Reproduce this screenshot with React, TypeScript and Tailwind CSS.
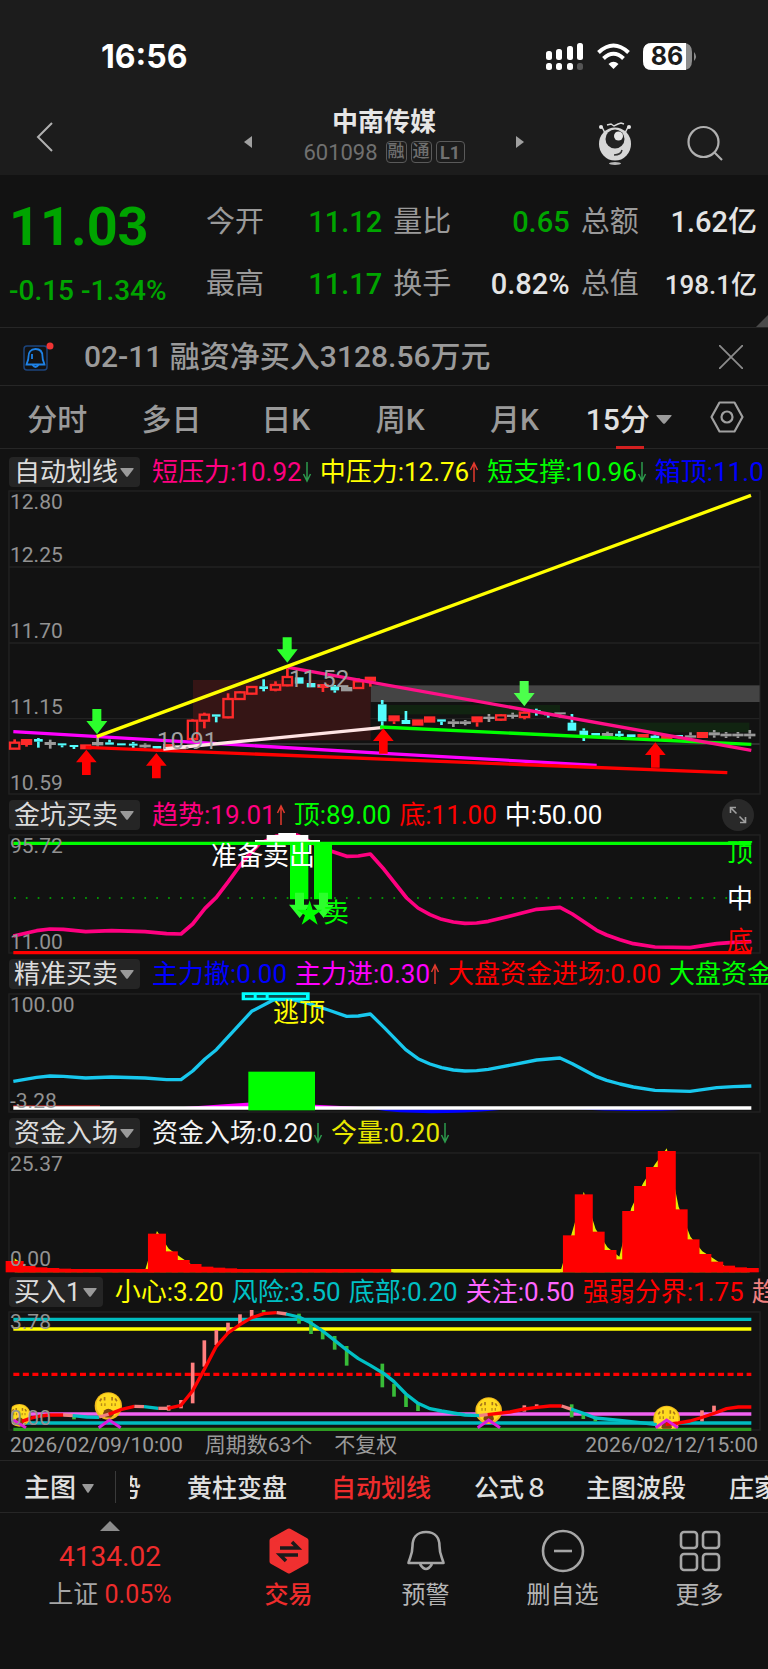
import React from 'react';

type Pt = [number, number];
const pts = (a: Pt[]) => a.map((p) => p.join(',')).join(' ');

const RED = '#ff2a2a';
const CYAN = '#54fcfc';
const GRAY = '#9a9a9a';
const STEP = 35.57;
const barX = (i: number) => 44 + STEP * i;

/* kind, body top, body bottom, wick top, wick bottom */
type Candle = ['h' | 'r' | 'c' | 'g', number, number, number, number];
const CANDLES: Candle[] = [
  ['h', 786, 808, 778, 808], ['r', 777, 795, 777, 800], ['c', 777, 785, 774, 803], ['g', 786, 795, 779, 806],
  ['c', 790, 796, 790, 802], ['c', 795, 801, 795, 807], ['r', 793, 808, 793, 808], ['g', 786, 796, 773, 800],
  ['c', 787, 794, 779, 794], ['c', 790, 796, 790, 796], ['c', 791, 797, 786, 804], ['g', 794, 802, 790, 805],
  ['c', 798, 806, 798, 814], ['r', 792, 803, 792, 803], ['g', 795, 808, 795, 808], ['h', 720, 779, 718, 781],
  ['h', 702, 724, 698, 745], ['c', 703, 710, 703, 727], ['h', 655, 714, 640, 715], ['h', 635, 659, 633, 660],
  ['h', 619, 643, 618, 644], ['c', 619, 627, 598, 634], ['h', 613, 631, 604, 634], ['h', 589, 618, 565, 619],
  ['c', 592, 611, 592, 611], ['c', 609, 622, 609, 622], ['r', 612, 624, 612, 636], ['c', 619, 631, 615, 638],
  ['g', 621, 634, 621, 634], ['h', 602, 626, 595, 627], ['r', 590, 604, 590, 620], ['c', 673, 724, 660, 745],
  ['r', 706, 724, 706, 732], ['c', 720, 732, 693, 732], ['r', 718, 737, 718, 737], ['r', 709, 728, 709, 728],
  ['c', 718, 725, 718, 735], ['g', 724, 732, 718, 741], ['g', 724, 732, 720, 736], ['r', 709, 727, 709, 740],
  ['g', 710, 717, 702, 726], ['h', 704, 721, 702, 723], ['g', 704, 711, 698, 716], ['h', 696, 713, 694, 718],
  ['c', 690, 696, 686, 707], ['c', 700, 706, 700, 713], ['g', 697, 703, 697, 713], ['c', 728, 752, 702, 752],
  ['c', 752, 765, 745, 783], ['c', 759, 767, 759, 767], ['g', 759, 768, 755, 777], ['c', 761, 768, 753, 775],
  ['c', 763, 771, 763, 771], ['r', 762, 773, 762, 773], ['c', 767, 775, 764, 775], ['r', 765, 783, 765, 783],
  ['c', 765, 773, 765, 773], ['g', 766, 773, 757, 778], ['r', 756, 774, 756, 774], ['g', 757, 766, 750, 773],
  ['g', 761, 769, 756, 774], ['g', 761, 769, 756, 774], ['g', 761, 769, 750, 776],
];

const TREND: Pt[] = [
  [40, 438], [110, 422], [150, 417], [190, 418], [257, 425], [335, 422], [435, 425], [500, 431], [543, 432],
  [578, 402], [615, 355], [649, 322], [685, 275], [730, 213], [780, 160], [830, 138], [890, 135], [940, 160],
  [990, 182], [1040, 199], [1075, 198], [1111, 192], [1152, 238], [1220, 324], [1254, 354], [1290, 374],
  [1325, 388], [1360, 396], [1395, 400], [1430, 399], [1465, 394], [1540, 376], [1610, 358], [1680, 352],
  [1717, 372], [1790, 421], [1820, 435], [1860, 449], [1900, 461], [1965, 471], [2070, 473], [2150, 461],
  [2200, 457], [2254, 455],
];
const FLOW: Pt[] = [
  [40, 394], [110, 382], [150, 378], [190, 379], [257, 384], [335, 381], [435, 384], [500, 389], [543, 389],
  [578, 363], [615, 327], [649, 299], [755, 184], [820, 150], [870, 147], [925, 160], [985, 180], [1040, 199],
  [1075, 198], [1111, 192], [1152, 232], [1217, 299], [1254, 326], [1290, 342], [1325, 353], [1360, 360],
  [1395, 363], [1430, 362], [1465, 358], [1540, 344], [1610, 330], [1680, 324], [1717, 341], [1790, 380],
  [1820, 391], [1860, 402], [1900, 411], [1965, 421], [2070, 424], [2150, 413], [2200, 410], [2254, 408],
];

const CAPITAL: Record<number, number> = {
  0: 453, 1: 468, 2: 472, 3: 474, 4: 476, 12: 371, 13: 424, 14: 450, 15: 462, 16: 470, 17: 473, 18: 475,
  47: 376, 48: 253, 49: 365, 50: 420, 51: 448, 52: 303, 53: 228, 54: 171, 55: 123, 56: 298, 57: 388, 58: 432,
  59: 455, 60: 467, 61: 472, 62: 474,
};
const capitalTop = (i: number) => CAPITAL[i] ?? (i > 31 && i < 47 ? 484 : 477);
const BARS = Array.from({ length: 63 }, (_, i) => i);

const SEGMENTS: [string, Pt[]][] = [
  ['#ff0000', [[66, 424], [90, 415], [120, 408], [150, 405], [190, 405]]],
  ['#f08080', [[190, 405], [222, 407]]],
  ['#00c0c4', [[218, 407], [260, 411], [297, 412]]],
  ['#f08080', [[297, 411], [328, 402]]],
  ['#ff0000', [[326, 403], [365, 388], [403, 379]]],
  ['#f08080', [[403, 379], [432, 380]]],
  ['#00c0c4', [[432, 380], [475, 385]]],
  ['#f08080', [[475, 385], [505, 385]]],
  ['#ff0000', [[503, 385], [543, 376], [578, 332], [613, 268], [649, 199], [684, 159], [720, 134], [755, 113], [791, 101], [830, 98]]],
  ['#f08080', [[830, 98], [860, 102]]],
  ['#00c0c4', [[858, 102], [897, 111], [933, 129], [968, 153], [1004, 181], [1040, 210], [1075, 236], [1111, 256], [1152, 281], [1182, 305], [1218, 342], [1254, 370], [1290, 386], [1325, 393], [1395, 405], [1440, 407]]],
  ['#f08080', [[1437, 407], [1465, 403]]],
  ['#ff0000', [[1463, 404], [1530, 396], [1573, 387], [1610, 382], [1650, 378], [1685, 378]]],
  ['#f08080', [[1685, 378], [1715, 388]]],
  ['#00c0c4', [[1713, 387], [1750, 400], [1786, 414], [1860, 421], [1920, 428], [1970, 434]]],
  ['#ff0000', [[1997, 433], [2035, 429], [2070, 423], [2110, 411], [2145, 399], [2180, 386], [2215, 381], [2254, 381]]],
];
const UP_TICKS: [number, number, number][] = [
  [506, 376, 392], [543, 360, 385], [578, 248, 370], [613, 181, 260], [649, 150, 195], [684, 128, 160],
  [720, 103, 135], [755, 90, 115], [1573, 376, 395], [1610, 373, 382], [2106, 391, 424], [2142, 377, 398],
];
const DOWN_TICKS: [number, number, number][] = [
  [222, 405, 418], [791, 90, 98], [897, 101, 131], [933, 121, 162], [968, 150, 178], [1004, 168, 209],
  [1040, 198, 257], [1147, 251, 322], [1182, 311, 350], [1218, 345, 381], [1254, 370, 393], [1715, 373, 412],
  [1750, 402, 417], [1786, 410, 424],
];

function Chart({ h, shift, label, axis, children, texts }: {
  h: number; shift: number; label: string; axis: [string, number][];
  children: React.ReactNode; texts?: React.ReactNode;
}) {
  return (
    <svg viewBox={`0 0 768 ${h}`} role="img" aria-label={label} className="block w-full overflow-visible">
      <rect x="9" y="0" width="751" height={h - 1} fill="none" stroke="#222222" strokeWidth="1.4" />
      <g transform={`scale(0.333333) translate(0 ${-shift})`}>{children}</g>
      {axis.map(([t, y]) => (
        <text key={t} x="10" y={y} fontSize="21" fill="#929292">{t}</text>
      ))}
      {texts}
    </svg>
  );
}

function Caret({ className }: { className: string }) {
  return (
    <svg viewBox="0 0 12 9" preserveAspectRatio="none" className={className} aria-hidden="true">
      <path d="M1 0h10q1.400 0 .6 1L6.700 8.400q-.7.8-1.400 0L.4 1Q-.4 0 1 0z" fill="currentColor" />
    </svg>
  );
}

type Item = { t: string; c: string; a?: 'up' | 'down' };

function Indicators({ name, items, first, expand }: { name: string; items: Item[]; first?: boolean; expand?: boolean }) {
  return (
    <div className={`flex items-center gap-3 overflow-hidden pl-[9px] ${first ? 'h-[42px] pt-1' : 'h-10'}`}>
      <button className="flex h-[30px] shrink-0 items-center gap-0.5 rounded bg-[#252525] pr-1.5 pl-[5px] text-[26px] leading-[30px] text-[#dcdcdc]">
        {name}
        <Caret className="h-[9px] w-[14px] text-[#9a9a9a]" />
      </button>
      <div className="flex min-w-0 flex-1 items-center gap-2 overflow-hidden text-[26px] leading-[34px] whitespace-nowrap">
        {items.map((it) => (
          <span key={it.t} className={`flex shrink-0 items-center ${it.c}`}>
            {it.t}
            {it.a && (
              <svg viewBox="0 0 10 22" className="h-[22px] w-[10px]" aria-hidden="true">
                {it.a === 'up' ? (
                  <path d="M5 21V3M1.500 9L5 2l3.500 7" fill="none" stroke="#e23a2e" strokeWidth="1.500" />
                ) : (
                  <path d="M5 1v18M1.500 13L5 20l3.500-7" fill="none" stroke="#2d9a4c" strokeWidth="1.500" />
                )}
              </svg>
            )}
          </span>
        ))}
      </div>
      {expand && (
        <button aria-label="展开" className="mr-[14px] flex size-8 shrink-0 items-center justify-center rounded-full bg-[#292929]">
          <svg viewBox="0 0 18 18" className="size-[18px]" fill="none" stroke="#a0a0a0" strokeWidth="1.600">
            <path d="M1.500 7V1.500H7M1.500 1.500l6 6M11 16.500h5.500V11M16.500 16.500l-6-6" />
          </svg>
        </button>
      )}
    </div>
  );
}

const downArrow = (x: number, y: number) => `M${x - 13} ${y}h27v36h18l-31 40l-32-40h18z`;
const upArrow = (x: number, y: number) => `M${x} ${y}l31 38h-18v38h-26v-38h-18z`;

function MainChart() {
  return (
    <Chart h={304} shift={33} label="自动划线" axis={[['12.80', 18], ['12.25', 71], ['11.70', 147], ['11.15', 223], ['10.59', 299]]}
      texts={<g fontSize="24" fill="#a0a0a0"><text x="157" y="258">10.91</text><text x="289" y="196">11.52</text></g>}>
      <path d="M27 261H2279M27 489H2279M27 716H2279" stroke="#222222" strokeWidth="4" />
      <path d="M560 792H2279" stroke="#3a3a3a" strokeWidth="4" />
      <rect x="1112" y="616" width="1167" height="50" fill="#444444" />
      <rect x="579" y="600" width="533" height="181" fill="#351515" />
      <rect x="1160" y="675" width="520" height="28" fill="#112411" />
      <rect x="1720" y="728" width="528" height="29" fill="#112411" />
      {CANDLES.map(([k, t, b, wt, wb], i) => {
        const x = barX(i);
        const color = k === 'c' ? CYAN : k === 'g' ? GRAY : RED;
        const half = k === 'c' ? 13 : 17;
        return (
          <g key={i} fill={color} stroke={color}>
            {wt < t && <path d={`M${x} ${wt}V${t}`} strokeWidth="8" />}
            {wb > b && <path d={`M${x} ${b}V${wb}`} strokeWidth="8" />}
            {k === 'h' ? (
              <rect x={x - 14} y={t + 2} width="28" height={b - t - 4} fill="none" strokeWidth="7" />
            ) : (
              <rect x={x - half} y={t} width={half * 2} height={b - t} stroke="none" />
            )}
          </g>
        );
      })}
      <g fill="none" strokeWidth="10">
        <path d="M40 755L1152 820L1790 856" stroke="#ff00ff" />
        <path d="M257 802L2182 878" stroke="#ff0000" />
        <path d="M490 807L1152 742" stroke="#ffe4e4" />
        <path d="M1140 741L2254 793" stroke="#00ff00" />
        <path d="M864 562L2254 811" stroke="#ff1088" />
        <path d="M290 770L2253 46" stroke="#ffff00" />
      </g>
      <g fill="#2cff2c">
        <path d={downArrow(290, 687)} />
        <path d={downArrow(861, 472)} />
        <path d={downArrow(1572, 603)} fill="#4cff4c" />
      </g>
      <g fill="#ff0000">
        <path d={upArrow(259, 809)} />
        <path d={upArrow(469, 819)} />
        <path d={upArrow(1150, 745)} />
        <path d={upArrow(1966, 787)} />
      </g>
    </Chart>
  );
}

function TrendChart() {
  return (
    <Chart h={119} shift={135} label="金坑买卖" axis={[['95.72', 18], ['11.00', 114]]}
      texts={
        <g fontSize="26">
          <text x="211" y="30" fill="#ffffff">准备卖出</text>
          <text x="323" y="87" fill="#00ff00">卖</text>
          <text x="727" y="27" fill="#00ff00">顶</text>
          <text x="727" y="73" fill="#ffffff">中</text>
          <text x="727" y="115" fill="#ff0000">底</text>
        </g>
      }>
      <path d="M42 324H2254" stroke="#00c000" strokeWidth="5" strokeDasharray="5 30.57" />
      <polyline points={pts(TREND)} fill="none" stroke="#ff0080" strokeWidth="11" strokeLinejoin="round" />
      <path d="M40 488H2254" stroke="#ff0000" strokeWidth="10" />
      <path d="M870 160h55v168h-55zM942 160h54v168h-54z" fill="#00ff00" />
      <path d="M765 150h35v-15h35v-6h53v6h37v15h35v7H765z" fill="#ffffff" />
      <path d="M40 160H2254" stroke="#00ff00" strokeWidth="10" />
      <path d={`${downArrow(898, 308)}${downArrow(970, 308)}`} fill="#2cff2c" />
      <path d="M929 331l9 28h29l-24 17 10 28-24-17-24 17 10-28-24-17h29z" fill="#00ff00" />
    </Chart>
  );
}

function FlowChart() {
  return (
    <Chart h={119} shift={132} label="精准买卖" axis={[['100.00', 18], ['-3.28', 114]]}
      texts={<text x="273" y="28" fontSize="26" fill="#ffff00">逃顶</text>}>
      <polyline points={pts(FLOW)} fill="none" stroke="#18c8ee" strokeWidth="10" strokeLinejoin="round" />
      <path d="M540 472L740 458L800 456V474zM945 464L1100 472H945z" fill="#ff00ff" />
      <path d="M1120 478Q1260 500 1500 480zM1720 478Q1900 487 2060 479z" fill="#0000ff" />
      <path d="M40 468H300" stroke="#ff3030" strokeWidth="3" />
      <path d="M40 474H2254" stroke="#ffffff" strokeWidth="10" />
      <rect x="745" y="365" width="200" height="116" fill="#00ff00" />
      <path d="M725 127h204v24H725z" fill="#00ffff" />
      <path d="M735 135h26v8h-26zM770 135h27v8h-27zM806 135h112v8H806z" fill="#0a4a4e" />
    </Chart>
  );
}

function CapitalChart() {
  const line = BARS.map((i) => [barX(i), capitalTop(i) - (capitalTop(i) < 460 ? 8 : -4)] as Pt);
  return (
    <Chart h={119} shift={129} label="资金入场" axis={[['25.37', 18], ['0.00', 113]]}>
      <polygon points={`44,487 ${pts(line)} 2249,487`} fill="#e8e800" />
      <path d="M1172 482H1688" stroke="#e8e800" strokeWidth="10" />
      {BARS.filter((i) => i < 32 || i > 46).map((i) => (
        <rect key={i} x={barX(i) - 27} y={capitalTop(i)} width="54" height={487 - capitalTop(i)} fill="#ff0000" />
      ))}
    </Chart>
  );
}

function Face({ x, y, r }: { x: number; y: number; r: number }) {
  return (
    <g transform={`translate(${x} ${y}) scale(${r / 40})`}>
      <circle r="40" fill="#f0b81c" />
      <circle r="35" cy="-2" fill="#ffdb20" />
      <path d="M-20-22l-5 8M-11-26v10M11-26v10M20-22l5 8" stroke="#a8741a" strokeWidth="5" />
      <path d="M-20-8v8M-10-8v8M10-8v8M20-8v8" stroke="#b98d16" strokeWidth="4" />
      <path d="M-16 26Q-14 8 0 8Q14 8 16 26L8 34H-8z" fill="#7a4210" />
    </g>
  );
}

function BuyChart() {
  return (
    <Chart h={119} shift={96} label="买入1" axis={[['3.78', 17], ['0.00', 113]]}>
      <g strokeWidth="10">
        <path d="M40 118H2254" stroke="#00bcc0" />
        <path d="M40 147H2254" stroke="#ffff00" />
        <path d="M40 283H2254" stroke="#ff0000" strokeDasharray="18 10.57" />
        <path d="M40 402H2254" stroke="#f062f0" />
        <path d="M40 429H2254" stroke="#00bcc0" />
        <path d="M40 448H2254" stroke="#2e9a22" />
      </g>
      <clipPath id="plot"><rect x="35" y="300" width="2219" height="146" /></clipPath>
      <g clipPath="url(#plot)">
        <Face x={58} y={406} r={34} />
        <Face x={325} y={378} r={41} />
        <Face x={1466} y={392} r={40} />
        <Face x={2000} y={417} r={40} />
      </g>
      {UP_TICKS.map(([x, a, b]) => <path key={x} d={`M${x} ${a}V${b}`} stroke="#ff8080" strokeWidth="11" />)}
      {DOWN_TICKS.map(([x, a, b]) => <path key={x} d={`M${x} ${a}V${b}`} stroke="#38bc38" strokeWidth="11" />)}
      {SEGMENTS.map(([c, p], i) => (
        <polyline key={i} points={pts(p)} fill="none" stroke={c} strokeWidth="10" strokeLinejoin="round" />
      ))}
      <path d="M40 420L78 443M296 443L328 420L362 443M1433 443L1466 420L1500 443M1967 443L2000 420L2034 443" fill="none" stroke="#dc1edc" strokeWidth="9" />
    </Chart>
  );
}

const STATS = [
  ['今开', '11.12', 'text-[#00a400] text-[29px]'], ['量比', '0.65', 'text-[#00a400] text-[29px]'], ['总额', '1.62亿', 'text-[#e4e4e4] text-[29px]'],
  ['最高', '11.17', 'text-[#00a400] text-[29px]'], ['换手', '0.82%', 'text-[#e4e4e4] text-[29px]'], ['总值', '198.1亿', 'text-[#e4e4e4] text-[26px]'],
];

function Header() {
  return (
    <header className="bg-[#1c1c1c]">
      <div className="flex h-[88px] items-end justify-between pr-[70px] pl-[101px]">
        <time className="mb-[11px] font-[Inter] text-[32px] leading-[40px] font-bold text-white">16:56</time>
        <svg viewBox="0 0 152 28" className="mb-[17px] h-7 w-[152px]" aria-label="信号 无线网络 电量 86">
          <g fill="#fff">
            <rect x="0" y="8" width="6" height="9" rx="2.500" /><rect x="10" y="6" width="6" height="11" rx="2.500" />
            <rect x="21" y="3" width="6" height="14" rx="2.500" /><rect x="31" y="0" width="6" height="17" rx="2.500" />
            <rect x="0" y="20" width="6" height="7" rx="2.500" /><rect x="10" y="20" width="6" height="7" rx="2.500" />
            <rect x="21" y="20" width="6" height="7" rx="2.500" /><rect x="31" y="20" width="6" height="7" rx="2.500" fill="#555" />
            <path d="M67.500 26l-5-5q5-4.500 10 0z" />
          </g>
          <g fill="none" stroke="#fff" strokeWidth="4">
            <path d="M52.500 9.500Q67.500-4.500 82.500 9.500M57.500 15.500Q67.500 6 77.500 15.500" />
          </g>
          <path d="M106 0h31q9 0 9 9v9q0 9-9 9h-31q-9 0-9-9V9q0-9 9-9z" fill="#8c8c8c" />
          <path d="M106 0h34v27h-34q-9 0-9-9V9q0-9 9-9z" fill="#fff" />
          <path d="M148 9q4 4.500 0 9z" fill="#8c8c8c" />
          <text x="121" y="22" textAnchor="middle" fontSize="25" fontWeight="700" fontFamily="Inter" fill="#1c1c1c">86</text>
        </svg>
      </div>
      <div className="flex h-[87px] items-start pr-[45px] pl-[34px]">
        <button aria-label="返回" className="mt-[34px] w-[22px]">
          <svg viewBox="0 0 22 30" className="h-[30px] w-[22px]" fill="none" stroke="#b0b0b0" strokeWidth="2"><path d="M18 1L4 15l14 14" /></svg>
        </button>
        <div className="flex flex-1 justify-center pl-[115px]">
          <button aria-label="上一只" className="mt-[47px] h-[14px]">
            <svg viewBox="0 0 8 12" className="h-3 w-2" fill="#a0a0a0"><path d="M8 0v12L0 6z" /></svg>
          </button>
          <div className="mx-[51px] flex flex-col items-center">
            <h1 className="mt-[17px] text-[26px] leading-[34px] font-bold text-[#e6e6e6]">中南传媒</h1>
            <div className="flex h-[26px] items-center gap-1 text-[22px] text-[#707070]">
              <span className="mr-1">601098</span>
              <span className="flex h-[22px] w-[21px] items-center justify-center rounded border border-[#5a5a5a] text-[17px] font-medium">融</span>
              <span className="flex h-[22px] w-[21px] items-center justify-center rounded border border-[#5a5a5a] text-[17px] font-medium">通</span>
              <span className="flex h-[22px] w-[29px] items-center justify-center rounded border border-[#5a5a5a] text-[18px] font-bold">L1</span>
            </div>
          </div>
          <button aria-label="下一只" className="mt-[47px] h-[14px]">
            <svg viewBox="0 0 8 12" className="h-3 w-2" fill="#a0a0a0"><path d="M0 0v12l8-6z" /></svg>
          </button>
        </div>
        <button aria-label="智能助手" className="mt-[34px] w-9">
          <svg viewBox="0 0 36 44" className="h-11 w-9">
            <g stroke="#d8d8d8" fill="none" strokeWidth="1.500"><path d="M5 5l3 6M31 5l-3 6M10 3l4-1 3 2 4-2 3-1 3 1" /></g>
            <circle cx="4" cy="5" r="2" fill="#e8e8e8" /><circle cx="32" cy="5" r="2" fill="#e8e8e8" />
            <ellipse cx="18" cy="41.500" rx="6" ry="1.500" fill="#b8b8b8" />
            <ellipse cx="18" cy="22" rx="16" ry="16.500" fill="#d6d6d6" />
            <circle cx="18" cy="17" r="9.500" fill="#222" />
            <circle cx="21.500" cy="14" r="4.500" fill="#e6e6e6" />
            <path d="M17 33q7 0 8-5" stroke="#333" strokeWidth="1.500" fill="none" />
          </svg>
        </button>
        <button aria-label="搜索" className="mt-[37px] ml-[54px] w-9">
          <svg viewBox="0 0 36 38" className="h-[38px] w-9" fill="none" stroke="#b0b0b0" strokeWidth="2.200"><circle cx="16.500" cy="17" r="15" /><path d="M27 27l8 8" /></svg>
        </button>
      </div>
    </header>
  );
}

function NavItem({ label, children, active }: { label: string; children: React.ReactNode; active?: boolean }) {
  return (
    <button className={`flex w-[137px] shrink flex-col items-center gap-1 pt-[14px] text-[24px] leading-8 ${active ? 'font-medium text-[#ee2c2c]' : 'text-[#b4b4b4]'}`}>
      <svg viewBox="0 0 44 48" className="h-12 w-11" fill="none" stroke="#a6a6a6" strokeWidth="2.600">{children}</svg>
      {label}
    </button>
  );
}

export default function App() {
  return (
    <div className="w-full overflow-hidden bg-[#121212] font-[Roboto,'Noto_Sans_CJK_SC',sans-serif] text-[#9a9a9a]">
      <Header />

      <section className="relative flex h-[153px] border-b border-[#262626] pr-[11px]">
        <div className="w-[206px] shrink-0 pl-[9px] text-[#00a400]">
          <div className="mt-[21px] text-[54px] leading-[62px] font-bold">11.03</div>
          <div className="mt-[17px] text-[28px] leading-8 font-medium whitespace-nowrap">-0.15 -1.34%</div>
        </div>
        <dl className="mt-[28px] grid flex-1 grid-cols-3 content-start gap-x-[11px] gap-y-[22px]">
          {STATS.map(([k, v, c]) => (
            <div key={k} className="flex h-10 items-center justify-between whitespace-nowrap">
              <dt className="text-[29px]">{k}</dt>
              <dd className={`font-medium ${c}`}>{v}</dd>
            </div>
          ))}
        </dl>
        <svg viewBox="0 0 12 12" className="absolute right-0 bottom-0 size-3" aria-hidden="true"><path d="M12 0v12H0z" fill="#4a4a4a" /></svg>
      </section>

      <section className="flex h-[58px] items-center border-b border-[#262626] pr-[25px] pl-[23px]">
        <svg viewBox="0 0 32 32" className="h-8 w-8" fill="none" aria-hidden="true">
          <rect x="1" y="5" width="23" height="24" rx="3" stroke="#1c447c" strokeWidth="1.500" />
          <path d="M12.500 8c-5 0-7 3.500-7 7.500 0 4.500-1.500 5.500-2 8h18c-.5-2.500-2-3.500-2-8 0-4-2-7.500-7-7.500zM9.500 24q3 4 6 0M9 13v5" stroke="#1e82e6" strokeWidth="1.800" />
          <circle cx="27" cy="5" r="3.500" fill="#f03434" />
        </svg>
        <p className="ml-[29px] flex-1 text-[30px] font-medium whitespace-nowrap">02-11 融资净买入3128.56万元</p>
        <button aria-label="关闭"><svg viewBox="0 0 24 24" className="size-6" stroke="#8c8c8c" strokeWidth="1.800"><path d="M0 0l24 24M24 0L0 24" /></svg></button>
      </section>

      <nav className="flex h-[63px] items-center border-b border-[#262626] text-[30px] font-medium">
        {['分时', '多日', '日K', '周K', '月K'].map((t) => (
          <button key={t} className="h-full flex-1 pt-1">{t}</button>
        ))}
        <button className="relative flex h-full flex-1 items-center justify-center gap-1.5 pt-1 pr-1 text-[#e0e0e0]">
          15分
          <Caret className="h-[9px] w-4 text-[#9a9a9a]" />
          <span className="absolute right-[46px] -bottom-px h-[3px] w-7 bg-[#d32020]" />
        </button>
        <button aria-label="设置" className="flex h-full w-[78px] items-center pl-5">
          <svg viewBox="0 0 34 32" className="h-8 w-[34px]" fill="none" stroke="#a0a0a0" strokeWidth="2.200">
            <path d="M9.500 1.500h15l8 14.500-8 14.500h-15L1.500 16z" strokeLinejoin="round" /><circle cx="17" cy="16" r="5.500" />
          </svg>
        </button>
      </nav>

      <Indicators first name="自动划线" items={[
        { t: '短压力:10.92', c: 'text-[#ff0080]', a: 'down' }, { t: '中压力:12.76', c: 'text-[#ffff00]', a: 'up' },
        { t: '短支撑:10.96', c: 'text-[#00ff00]', a: 'down' }, { t: '箱顶:11.0', c: 'text-[#0000ff]' },
      ]} />
      <MainChart />
      <Indicators expand name="金坑买卖" items={[
        { t: '趋势:19.01', c: 'text-[#ff0080]', a: 'up' }, { t: '顶:89.00', c: 'text-[#00ff00]' },
        { t: '底:11.00', c: 'text-[#ff0000]' }, { t: '中:50.00', c: 'text-white' },
      ]} />
      <TrendChart />
      <Indicators name="精准买卖" items={[
        { t: '主力撤:0.00', c: 'text-[#0000ff]' }, { t: '主力进:0.30', c: 'text-[#ff00ff]', a: 'up' },
        { t: '大盘资金进场:0.00', c: 'text-[#ff0000]' }, { t: '大盘资金', c: 'text-[#00ff00]' },
      ]} />
      <FlowChart />
      <Indicators name="资金入场" items={[
        { t: '资金入场:0.20', c: 'text-[#f4f4f4]', a: 'down' }, { t: '今量:0.20', c: 'text-[#e8e800]', a: 'down' },
      ]} />
      <CapitalChart />
      <Indicators name="买入1" items={[
        { t: '小心:3.20', c: 'text-[#ffff00]' }, { t: '风险:3.50', c: 'text-[#00c0c4]' }, { t: '底部:0.20', c: 'text-[#00c0c4]' },
        { t: '关注:0.50', c: 'text-[#ff66ff]' }, { t: '强弱分界:1.75', c: 'text-[#ff0000]' }, { t: '趋', c: 'text-[#f08080]' },
      ]} />
      <BuyChart />

      <div className="flex h-[30px] items-center border-b border-[#262626] pr-[10px] pl-[10px] text-[21px] whitespace-nowrap">
        <span>2026/02/09/10:00</span>
        <span className="ml-[22px]">周期数63个</span>
        <span className="ml-[22px]">不复权</span>
        <span className="ml-auto">2026/02/12/15:00</span>
      </div>

      <nav className="flex h-[52px] items-center overflow-hidden border-b border-[#262626] pt-1 text-[25px] font-medium whitespace-nowrap text-[#e0e0e0]">
        <button className="flex shrink-0 items-center gap-[6px] pl-6 text-[26px]">主图<Caret className="h-[9px] w-3 text-[#9a9a9a]" /></button>
        <span className="mb-1 ml-[21px] h-8 w-px shrink-0 bg-[#3a3a3a]" />
        <div className="ml-[14px] flex min-w-0 flex-1 items-center overflow-hidden">
          <button className="flex w-[11px] shrink-0 justify-end overflow-hidden">势</button>
          <button className="ml-[46px] shrink-0">黄柱变盘</button>
          <button className="ml-[44px] shrink-0 text-[#ee2c2c]">自动划线</button>
          <button className="ml-[43px] shrink-0">公式８</button>
          <button className="ml-[37px] shrink-0">主图波段</button>
          <button className="ml-[43px] shrink-0">庄家</button>
        </div>
      </nav>

      <footer className="flex h-[156px] items-start">
        <a href="#index" className="flex w-[220px] flex-col items-center">
          <svg viewBox="0 0 20 10" className="mt-2 h-[10px] w-5" aria-hidden="true"><path d="M10 0l10 10H0z" fill="#8c8c8c" /></svg>
          <span className="mt-[8px] text-[28px] leading-9 text-[#ee2c2c]">4134.02</span>
          <span className="mt-1 text-[25px] leading-8 text-[#a6a6a6]">上证 <span className="text-[#ee2c2c]">0.05%</span></span>
        </a>
        <NavItem label="交易" active>
          <path d="M22 4l17 9.500v21L22 44 5 34.500v-21z" fill="#f03030" stroke="#f03030" strokeWidth="5" strokeLinejoin="round" />
          <path d="M13 21h18l-6-6M31 28H13l6 6" stroke="#1a1a1a" strokeWidth="3.500" />
        </NavItem>
        <NavItem label="预警">
          <path d="M22 5C12 5 8.500 12 8.500 19c0 9-3 12-4 17h35c-1-5-4-8-4-17C35.500 12 32 5 22 5zM16 37q6 10 12 0" strokeLinejoin="round" />
        </NavItem>
        <NavItem label="删自选"><circle cx="22" cy="24" r="20" /><path d="M13 24h18" /></NavItem>
        <NavItem label="更多">
          <rect x="3" y="5" width="16" height="16" rx="3" /><rect x="25" y="5" width="16" height="16" rx="3" />
          <rect x="3" y="27" width="16" height="16" rx="3" /><rect x="25" y="27" width="16" height="16" rx="3" />
        </NavItem>
      </footer>
    </div>
  );
}
